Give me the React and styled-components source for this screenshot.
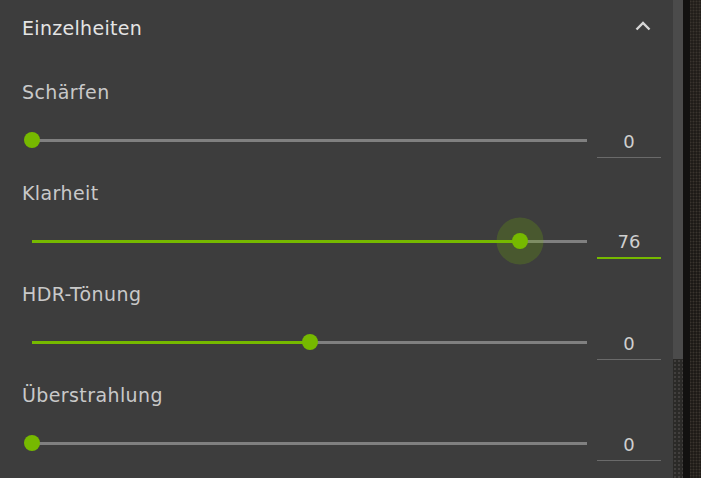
import React from "react";
import styled, { createGlobalStyle } from "styled-components";

const GlobalStyle = createGlobalStyle`
  html, body {
    margin: 0;
    padding: 0;
    background: #1a1715;
  }
  body {
    font-family: "DejaVu Sans", "Liberation Sans", sans-serif;
  }
`;

const sliders = [
  { label: "Schärfen", value: 0, min: 0, max: 100 },
  { label: "Klarheit", value: 76, min: -100, max: 100, focused: true },
  { label: "HDR-Tönung", value: 0, min: -100, max: 100 },
  { label: "Überstrahlung", value: 0, min: 0, max: 100 },
];

const Slider = ({ label, value, min, max, focused }) => {
  // thumb position along the track, in percent
  const pct = ((value - min) / (max - min)) * 100;
  return (
    <Row>
      <Label>{label}</Label>
      <SliderLine>
        <TrackArea>
          <Track>
            <Fill style={{ width: `${pct}%` }} />
            <Thumb style={{ left: `${pct}%` }} $focused={focused} />
          </Track>
        </TrackArea>
        <ValueBox $focused={focused}>{value}</ValueBox>
      </SliderLine>
    </Row>
  );
};

export default function App() {
  return (
    <Page>
      <GlobalStyle />
      <Panel>
        <Header>
          <Title>Einzelheiten</Title>
          <svg width="16" height="11" viewBox="0 0 16 11">
            <polyline points="1.5,9.5 8,3 14.5,9.5" fill="none" stroke="#d6d6d6" strokeWidth="2.4" />
          </svg>
        </Header>
        {sliders.map((s) => (
          <Slider key={s.label} {...s} />
        ))}
      </Panel>
      <Scrollbar>
        <ScrollThumb />
        <ScrollRest />
      </Scrollbar>
      <Backdrop />
    </Page>
  );
}

const Page = styled.div`
  display: flex;
  width: 701px;
  height: 478px;
  overflow: hidden;
`;

const Panel = styled.div`
  width: 673px;
  box-sizing: border-box;
  padding: 0 12px 0 22px;
  background: #3d3d3d;
`;

const Header = styled.div`
  height: 57px;
  display: flex;
  align-items: center;
  justify-content: space-between;
  padding-right: 10px;
  padding-bottom: 2px;
  box-sizing: border-box;

  svg {
    display: block;
    margin-bottom: 4px;
  }
`;

const Title = styled.div`
  color: #e4e4e4;
  font-size: 19px;
  letter-spacing: 0.3px;
`;

const Row = styled.div`
  padding-top: 23px;
`;

const Label = styled.div`
  color: #c9c9c9;
  font-size: 19px;
  letter-spacing: 0.4px;
  line-height: 24px;
  height: 24px;
  margin-bottom: 20px;
`;

const SliderLine = styled.div`
  display: grid;
  grid-template-columns: 1fr 64px;
  height: 34px;
`;

const TrackArea = styled.div`
  padding: 0 10px 2px;
  display: flex;
  align-items: center;
`;

const Track = styled.div`
  position: relative;
  flex: 1;
  height: 3px;
  background: #808080;
`;

const Fill = styled.div`
  position: absolute;
  left: 0;
  top: 0;
  bottom: 0;
  background: #76b900;
`;

const Thumb = styled.div`
  position: absolute;
  top: 50%;
  width: 16px;
  height: 16px;
  border-radius: 50%;
  background: #76b900;
  transform: translate(-50%, -50%);

  &::before {
    content: "";
    display: ${(p) => (p.$focused ? "block" : "none")};
    position: absolute;
    left: 50%;
    top: 50%;
    width: 47px;
    height: 47px;
    border-radius: 50%;
    background: rgba(118, 185, 0, 0.22);
    transform: translate(-50%, -50%);
  }
`;

const ValueBox = styled.div`
  box-sizing: border-box;
  display: flex;
  align-items: center;
  justify-content: center;
  color: #cfcfcf;
  font-size: 18px;
  border-bottom: ${(p) => (p.$focused ? "2px solid #76b900" : "1px solid #6a6a6a")};
  padding-top: ${(p) => (p.$focused ? "0" : "1px")};
`;

const Scrollbar = styled.div`
  width: 10px;
  display: flex;
  flex-direction: column;
`;

const ScrollThumb = styled.div`
  height: 359px;
  background: #4b4b4b;
`;

const ScrollRest = styled.div`
  flex: 1;
  background: radial-gradient(#4a4745 0.6px, transparent 1px) 0 0 / 4px 4px, #2b2a28;
`;

const Backdrop = styled.div`
  flex: 1;
  background:
    linear-gradient(90deg, #121110 0 7px, transparent 7px),
    radial-gradient(#3a342e 0.7px, transparent 1.2px) 0 0 / 3px 3px,
    linear-gradient(180deg, #231f1b, #1c1916 60%, #201c18);
`;
